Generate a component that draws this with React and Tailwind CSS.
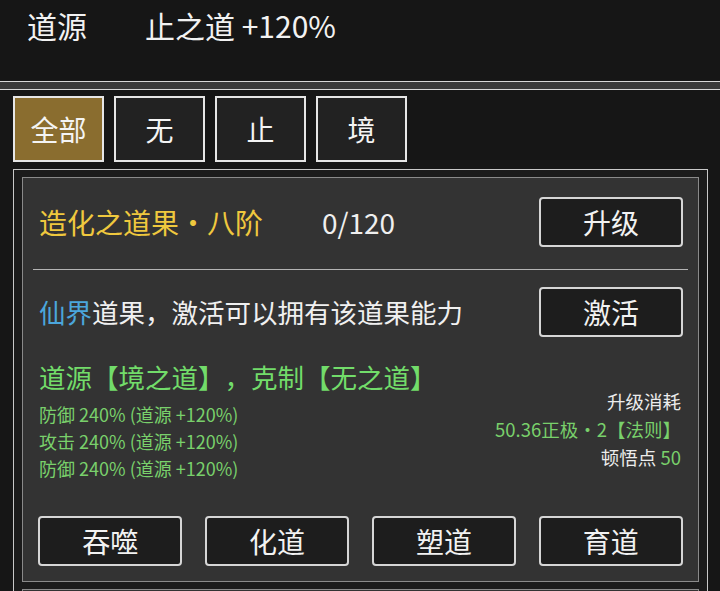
import React from 'react';

const FONT = { fontFamily: '"Noto Sans CJK SC", "Noto Sans", sans-serif' };

const TABS = ['全部', '无', '止', '境'];
const STATS = [
  ['防御', '240%', '+120%'],
  ['攻击', '240%', '+120%'],
  ['防御', '240%', '+120%'],
];
const ACTIONS = ['吞噬', '化道', '塑道', '育道'];

function GameButton({ children, className = '' }) {
  return (
    <button
      className={`h-[50px] rounded-[4px] border-2 border-[#d6d6d6] bg-[#1d1d1d] text-[28px] leading-none text-[#f2f2f2] ${className}`}
    >
      {children}
    </button>
  );
}

function FruitCard() {
  return (
    <div className="border border-[#8a8a8a] bg-[#333333] px-[15px] pt-[19px] pb-[15px]">
      {/* 标题 + 升级 */}
      <div className="flex items-center justify-between">
        <div className="flex items-center text-[28px] leading-[50px]">
          <span className="w-[284px] pl-[1px] text-[#efc83e]">造化之道果·八阶</span>
          <span className="text-[#efefef]">0/120</span>
        </div>
        <GameButton className="w-[144px]">升级</GameButton>
      </div>

      <div className="mx-[-5px] mt-[22px] h-px bg-[#b4b4b4]" />

      {/* 激活 */}
      <div className="mt-[17px] flex items-center justify-between">
        <div className="pl-[1px] text-[26.5px] leading-[50px] text-[#f0f0f0]">
          <span className="text-[#4ba6dc]">仙界</span>道果，激活可以拥有该道果能力
        </div>
        <GameButton className="w-[144px]">激活</GameButton>
      </div>

      {/* 道源 / 消耗 */}
      <div className="mt-[22px] flex items-start justify-between">
        <div>
          <div className="pl-[1px] text-[26.5px] leading-[36px] text-[#72dc6a]">
            道源【境之道】，克制【无之道】
          </div>
          <div className="mt-[6px] pl-[1px] text-[18px] leading-[27px] text-[#79d06b]">
            {STATS.map(([name, val, src], i) => (
              <div key={i}>
                {name} {val} (道源 {src})
              </div>
            ))}
          </div>
        </div>
        <div className="mr-[2px] pt-[28px] text-right text-[18.5px] leading-[28px]">
          <div className="text-[#ececec]">升级消耗</div>
          <div className="text-[#79d06b]">50.36正极·2【法则】</div>
          <div className="text-[#ececec]">
            顿悟点 <span className="text-[#79d06b]">50</span>
          </div>
        </div>
      </div>

      {/* 操作 */}
      <div className="mt-[34px] grid grid-cols-4 gap-x-[22.6px]">
        {ACTIONS.map(a => (
          <GameButton key={a}>{a}</GameButton>
        ))}
      </div>
    </div>
  );
}

export default function App() {
  const [tab, setTab] = React.useState(0);

  return (
    <div
      className="h-[591px] w-[720px] overflow-hidden bg-[#161616] text-white [text-spacing-trim:space-all]"
      style={FONT}
    >
      {/* 顶部信息 */}
      <div className="flex h-[81px] px-[27px] text-[30px] leading-[50px] text-[#f2f2f2]">
        <span className="w-[118px]">道源</span>
        <span>止之道 +120%</span>
      </div>

      <div className="h-[9px] border-y border-[#d8d8d8] bg-[#3a3a3a]" />

      {/* 分类 */}
      <div className="flex h-[79px] gap-[10px] pl-[13px] pt-[6px]">
        {TABS.map((t, i) => (
          <button
            key={t}
            onClick={() => setTab(i)}
            className={`flex h-[66px] w-[91px] items-center justify-center border-2 border-[#e6e6e6] text-[28px] leading-none text-[#f4f4f4] ${
              i === tab ? 'bg-[#8a6d2f]' : 'bg-[#222222]'
            }`}
          >
            {t}
          </button>
        ))}
      </div>

      {/* 列表 */}
      <div className="ml-[13px] w-[695px] border-x border-t border-[#c8c8c8] bg-[#1b1b1b] px-[8px] pt-[7px]">
        <FruitCard />
        {/* 下一张卡片，只露出顶边 */}
        <div className="mt-[7px] h-[200px] border border-[#8a8a8a] bg-[#333333]" />
      </div>
    </div>
  );
}
